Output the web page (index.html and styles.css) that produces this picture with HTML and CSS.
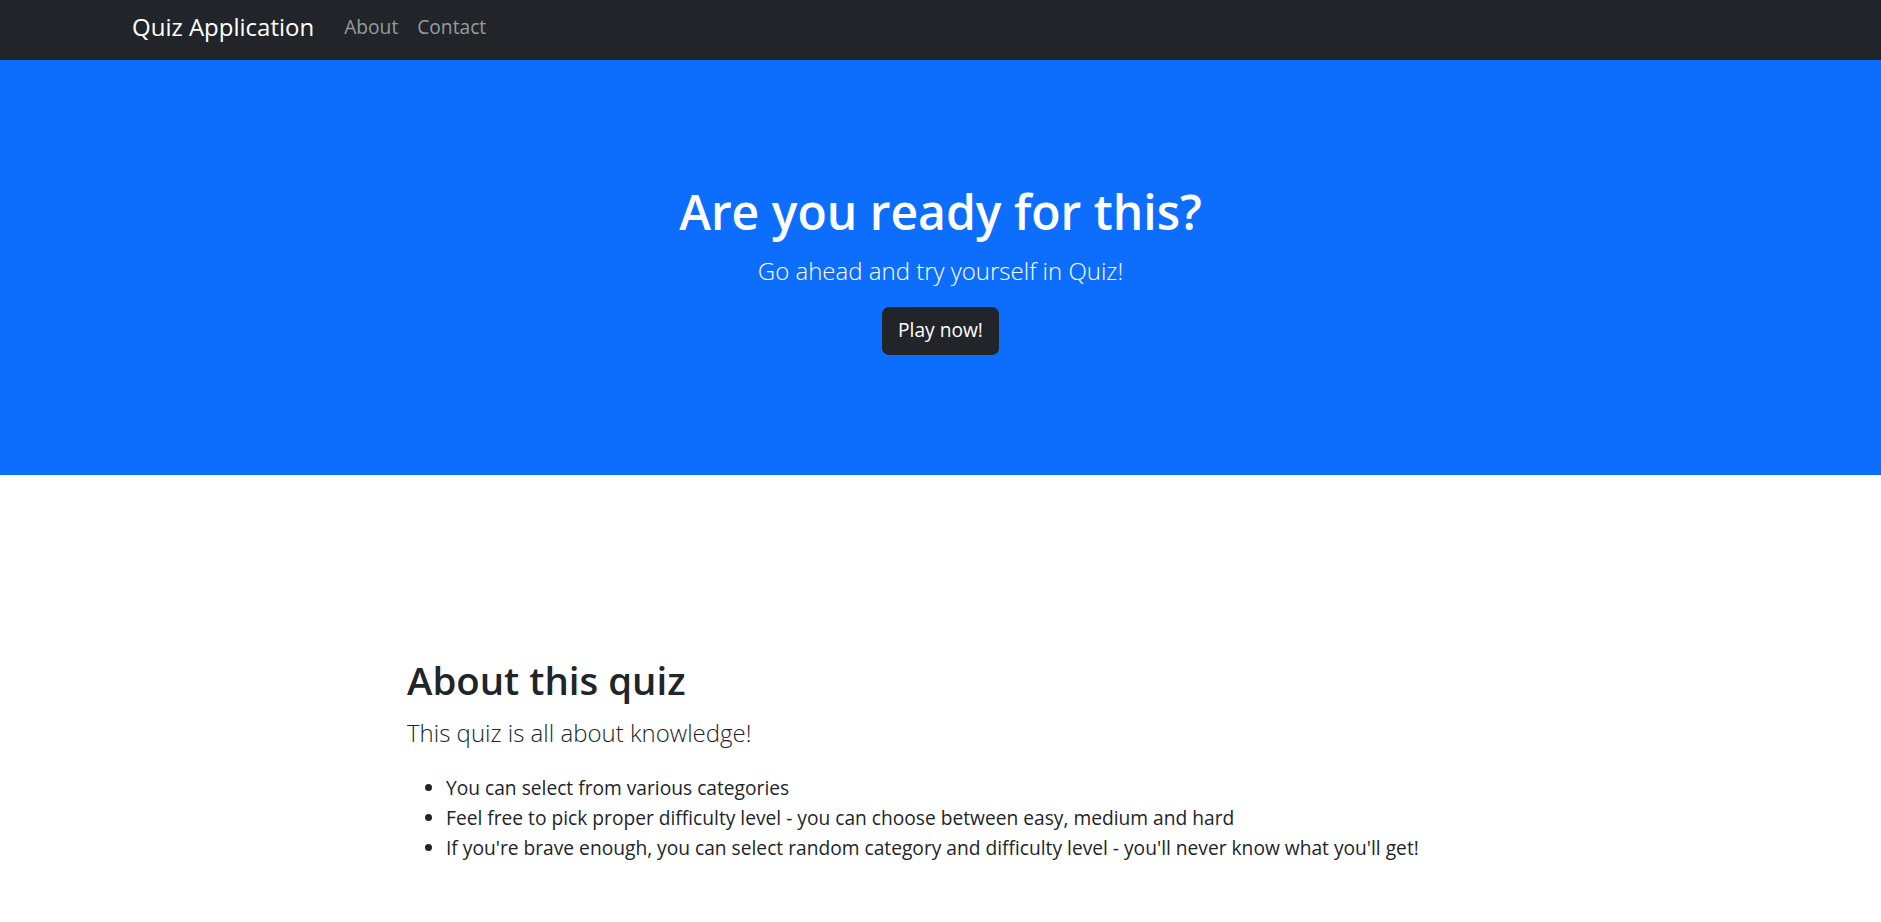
FILE: index.html
```html
<!DOCTYPE html>
<html lang="en">
<head>
<meta charset="utf-8">
<title>Quiz Application</title>
<link rel="stylesheet" href="styles.css">
</head>
<body>
<nav class="navbar">
  <div class="nav-inner">
    <a class="brand" href="#">Quiz Application</a>
    <ul class="nav-links">
      <li><a href="#">About</a></li>
      <li><a href="#">Contact</a></li>
    </ul>
  </div>
</nav>
<header class="hero">
  <h1 class="hero-title">Are you ready for this?</h1>
  <p class="hero-lead">Go ahead and try yourself in Quiz!</p>
  <a class="btn-dark" href="#">Play now!</a>
</header>
<main class="about">
  <h2 class="about-title">About this quiz</h2>
  <p class="about-lead">This quiz is all about knowledge!</p>
  <ul class="about-list">
    <li>You can select from various categories</li>
    <li>Feel free to pick proper difficulty level - you can choose between easy, medium and hard</li>
    <li>If you're brave enough, you can select random category and difficulty level - you'll never know what you'll get!</li>
  </ul>
</main>
</body>
</html>
```

FILE: styles.css
```css
* { box-sizing: border-box; }
html, body { margin: 0; padding: 0; }
body {
  font-family: "Open Sans", Lato, sans-serif;
  font-size: 19.2px;
  line-height: 1.5;
  color: #212529;
  background: #fff;
}
a { text-decoration: none; }

.navbar {
  background: #212529;
  height: 60px;
}
.nav-inner {
  max-width: 1617px;
  margin: 0 auto;
  height: 100%;
  display: flex;
  align-items: center;
  padding-bottom: 6px;
}
.brand {
  color: #fff;
  font-size: 24px;
  line-height: 36px;
  margin-right: 30px;
}
.nav-links {
  list-style: none;
  margin: 0;
  padding: 0;
  display: flex;
  gap: 19px;
}
.nav-links a {
  color: rgba(255, 255, 255, 0.55);
  font-size: 19.2px;
  line-height: 28.8px;
}

.hero {
  background: #0d6efd;
  color: #fff;
  text-align: center;
  padding: 123px 0 120px;
  display: flex;
  flex-direction: column;
  align-items: center;
}
.hero-title {
  margin: 0 0 12px;
  font-size: 48px;
  line-height: 57.6px;
  font-weight: 600;
}
.hero-lead {
  margin: 0 0 18px;
  font-size: 24px;
  line-height: 36px;
  font-weight: 300;
}
.btn-dark {
  display: inline-block;
  background: #212529;
  color: #fff;
  border-radius: 7px;
  font-size: 19.2px;
  line-height: 28.8px;
  padding: 9.6px 14.4px;
  width: 117px;
  text-align: center;
}

.about {
  max-width: 1067px;
  margin: 0 auto;
  padding-top: 182px;
}
.about-title {
  margin: 0 0 12px;
  font-size: 38.4px;
  line-height: 46px;
  font-weight: 600;
}
.about-lead {
  margin: 0 0 22px;
  font-size: 24px;
  line-height: 36px;
  font-weight: 300;
}
.about-list {
  margin: 0;
  padding-left: 39px;
}
.about-list li {
  line-height: 30px;
}
```
